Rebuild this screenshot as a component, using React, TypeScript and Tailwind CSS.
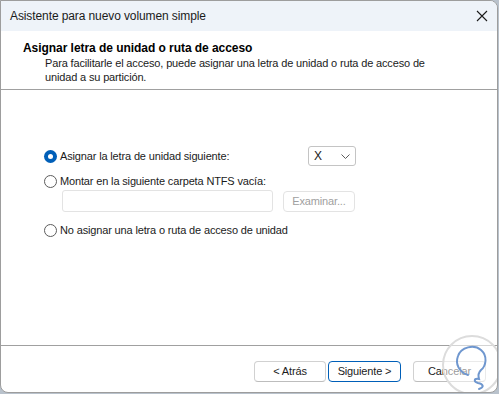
import React from 'react';

const Radio: React.FC<{ checked?: boolean }> = ({ checked }) =>
  checked ? (
    <span className="flex h-[13px] w-[13px] shrink-0 items-center justify-center rounded-full bg-[#005fb8]">
      <span className="h-[5px] w-[5px] rounded-full bg-white" />
    </span>
  ) : (
    <span className="h-[13px] w-[13px] shrink-0 rounded-full border border-[#5c5c5c] bg-white" />
  );

const Button: React.FC<{ children: React.ReactNode; primary?: boolean; disabled?: boolean; className?: string }> = ({
  children,
  primary,
  disabled,
  className = '',
}) => (
  <div
    className={`flex items-center justify-center rounded-[4px] border bg-white text-[11px] tracking-[-0.15px] ${
      primary ? 'border-[#005fb8] text-[#1b1b1b]' : 'border-[#d1d1d1] border-b-[#bdbdbd] text-[#1b1b1b]'
    } ${disabled ? 'border-[#e3e3e3] border-b-[#e3e3e3] text-[#a0a0a0]' : ''} ${className}`}
  >
    {children}
  </div>
);

const App: React.FC = () => {
  return (
    <div className="w-[499px] h-[394px] bg-[#b9c2cc] font-['Liberation_Sans',Arial,sans-serif] text-[#1b1b1b]">
      <div className="relative flex h-[393px] w-[498px] flex-col overflow-hidden rounded-tr-[8px] rounded-bl-[8px] rounded-br-[8px] border border-[#9d9d9d] bg-white">
        {/* title bar */}
        <div className="flex h-[30px] shrink-0 items-center justify-between bg-[#eef3f9] pl-[9px] pr-[9px]">
          <span className="text-[12px] tracking-[-0.1px] text-[#1b1b1b]">Asistente para nuevo volumen simple</span>
          <svg width="12" height="12" viewBox="0 0 12 12">
            <path d="M1 1 L11 11 M11 1 L1 11" stroke="#1b1b1b" strokeWidth="1.1" />
          </svg>
        </div>

        {/* header */}
        <div className="h-[59px] shrink-0 border-b border-[#a0a0a0] pl-[22px] pt-[10px]">
          <div className="text-[12px] font-bold leading-[15px] tracking-[-0.05px] text-black">
            Asignar letra de unidad o ruta de acceso
          </div>
          <div className="pl-[22px] text-[11px] leading-[14px] tracking-[-0.15px] text-[#1b1b1b]">
            Para facilitarle el acceso, puede asignar una letra de unidad o ruta de acceso de
            <br />
            unidad a su partición.
          </div>
        </div>

        {/* body */}
        <div className="flex flex-1 flex-col border-b border-[#a0a0a0] pl-[43px] pt-[56px] text-[11px] tracking-[-0.15px]">
          <div className="flex h-[20px] items-center">
            <div className="flex w-[264px] items-center gap-[3px]">
              <Radio checked />
              <span>Asignar la letra de unidad siguiente:</span>
            </div>
            <div className="flex h-[20px] w-[48px] items-center justify-between rounded-[3px] border border-[#c4c4c4] pl-[5px] pr-[5px]">
              <span className="text-[12px]">X</span>
              <svg width="9" height="5" viewBox="0 0 9 5">
                <path d="M0.5 0.5 L4.5 4.5 L8.5 0.5" fill="none" stroke="#5c5c5c" strokeWidth="1" />
              </svg>
            </div>
          </div>

          <div className="mt-[7px] flex h-[16px] items-center gap-[3px]">
            <Radio />
            <span>Montar en la siguiente carpeta NTFS vacía:</span>
          </div>

          <div className="mt-[1px] flex items-center pl-[18px]">
            <div className="h-[22px] w-[211px] rounded-[3px] border border-[#e3e3e3] bg-white" />
            <Button disabled className="ml-[10px] h-[21px] w-[72px]">
              Examinar...
            </Button>
          </div>

          <div className="mt-[10px] flex h-[16px] items-center gap-[3px]">
            <Radio />
            <span>No asignar una letra o ruta de acceso de unidad</span>
          </div>
        </div>

        {/* footer */}
        <div className="flex h-[46px] shrink-0 items-start justify-end pr-[11px] pt-[15px]">
          <Button className="h-[21px] w-[72px]">&lt; Atrás</Button>
          <Button primary className="ml-[2px] h-[21px] w-[73px]">
            Siguiente &gt;
          </Button>
          <Button className="ml-[12px] h-[21px] w-[73px]">Cancelar</Button>
        </div>

        {/* watermark */}
        <svg className="absolute left-[440px] top-[333px]" width="62" height="62" viewBox="0 0 62 62">
          <circle cx="31" cy="31" r="29" fill="white" fillOpacity="0.55" stroke="#dcdcdc" strokeWidth="2" />
          <path
            d="M27 41 C18 38 14 30 17 22 C20 13 33 10 40 16 C47 22 45 32 40 36 C37 39 37 42 38 45 C32 44 33 48 37 49 C42 50 44 53 38 55"
            fill="none"
            stroke="#6f97cf"
            strokeWidth="2"
            strokeLinecap="round"
          />
        </svg>
      </div>
    </div>
  );
};

export default App;
